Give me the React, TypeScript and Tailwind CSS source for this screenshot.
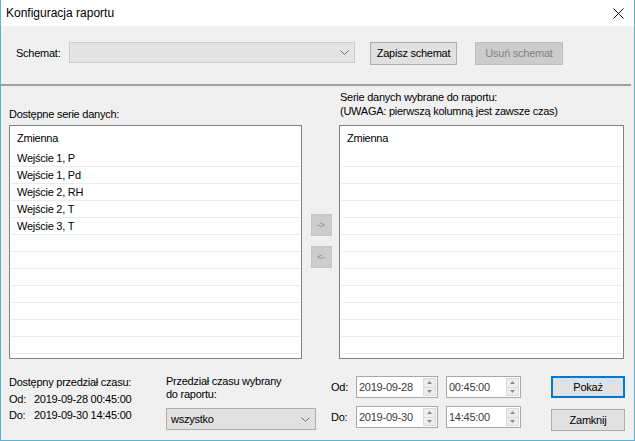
import React from 'react';

const Chevron = ({ color = '#707070' }: { color?: string }) => (
  <svg width="9" height="5" viewBox="0 0 9 5">
    <path d="M0.5 0.5 L4.5 4.5 L8.5 0.5" fill="none" stroke={color} strokeWidth="1" />
  </svg>
);

const Spin = () => (
  <div className="w-[13px] flex flex-col my-[1px] mr-[1px] border border-[#dadada] bg-[#ededed]">
    <div className="flex-1 flex items-center justify-center border-b border-[#dadada]">
      <svg width="5" height="3" viewBox="0 0 5 3"><path d="M0 3 L2.5 0 L5 3Z" fill="#8a8a8a" /></svg>
    </div>
    <div className="flex-1 flex items-center justify-center">
      <svg width="5" height="3" viewBox="0 0 5 3"><path d="M0 0 L2.5 3 L5 0Z" fill="#8a8a8a" /></svg>
    </div>
  </div>
);

const SpinBox = ({ value, w }: { value: string; w: string }) => (
  <div className={`${w} h-[22px] flex bg-white border border-[#a8a8a8]`}>
    <div className="flex-1 flex items-center pl-[2px] text-[#3a3a3a]">{value}</div>
    <Spin />
  </div>
);

const ListBox = ({ items, width }: { items: string[]; width: string }) => {
  const rows = Array.from({ length: 12 }, (_, i) => items[i] ?? '');
  return (
    <div className={`${width} h-[234px] bg-white border border-[#828282] overflow-hidden`}>
      <div className="h-[24px] flex items-center pl-[7px]">Zmienna</div>
      {rows.map((r, i) => (
        <div key={i} className="h-[17px] mx-[1px] border-b border-[#ececec] flex items-center pl-[6px]">
          {r}
        </div>
      ))}
    </div>
  );
};

export default function App() {
  return (
    <div className="w-[635px] h-[441px] bg-[#f0f0f0] border-x border-b border-[#5cb3cf] flex flex-col font-['Liberation_Sans',Arial,sans-serif] text-[11px] tracking-[-0.25px] text-black leading-[13px] overflow-hidden">
      {/* title bar */}
      <div className="h-[26px] bg-white flex items-center justify-between pl-[5px] pr-[10px]">
        <span className="text-[12px] tracking-normal">Konfiguracja raportu</span>
        <svg width="11" height="11" viewBox="0 0 11 11">
          <path d="M0.5 0.5 L10.5 10.5 M10.5 0.5 L0.5 10.5" stroke="#111" strokeWidth="1" />
        </svg>
      </div>

      {/* schemat row */}
      <div className="h-[58px] pt-[16px] flex items-start">
        <span className="ml-[15px] w-[53px] h-[22px] flex items-center">Schemat:</span>
        <div className="w-[286px] h-[21px] bg-[#e4e4e4] border border-[#cccccc] flex items-center justify-end pr-[5px]">
          <Chevron />
        </div>
        <button className="ml-[15px] w-[87px] h-[23px] bg-[#e1e1e1] border border-[#adadad] flex items-center justify-center">
          Zapisz schemat
        </button>
        <button className="ml-[18px] w-[88px] h-[23px] bg-[#cccccc] border border-[#bfbfbf] text-[#838383] flex items-center justify-center">
          Usuń schemat
        </button>
      </div>

      {/* separator */}
      <div className="h-[2px] -ml-[1px] mr-[3px] bg-[#a0a0a0]" />

      {/* lists */}
      <div className="flex pl-[8px]">
        <div className="flex flex-col">
          <div className="h-[39px] flex items-end pb-[4px]">Dostępne serie danych:</div>
          <ListBox
            width="w-[293px]"
            items={['Wejście 1, P', 'Wejście 1, Pd', 'Wejście 2, RH', 'Wejście 2, T', 'Wejście 3, T']}
          />
        </div>
        <div className="w-[37px] flex flex-col items-center pt-[128px] pl-[1px]">
          <div className="w-[21px] h-[22px] bg-[#cccccc] border border-[#c4c4c4] text-[#8a8a8a] text-[9px] flex items-center justify-center">
            -&gt;
          </div>
          <div className="mt-[10px] w-[21px] h-[22px] bg-[#cccccc] border border-[#c4c4c4] text-[#8a8a8a] text-[9px] flex items-center justify-center">
            &lt;-
          </div>
        </div>
        <div className="flex flex-col">
          <div className="h-[39px] pt-[4px] pl-[1px] leading-[14px]">
            <div>Serie danych wybrane do raportu:</div>
            <div>(UWAGA: pierwszą kolumną jest zawsze czas)</div>
          </div>
          <ListBox width="w-[285px]" items={[]} />
        </div>
      </div>

      {/* bottom */}
      <div className="flex pl-[8px] pt-[17px]">
        <div className="w-[157px] flex flex-col leading-[16.5px] -mt-[2px]">
          <div>Dostępny przedział czasu:</div>
          <div className="flex">
            <span className="w-[25px]">Od:</span>
            <span>2019-09-28 00:45:00</span>
          </div>
          <div className="flex">
            <span className="w-[25px]">Do:</span>
            <span>2019-09-30 14:45:00</span>
          </div>
        </div>
        <div className="w-[163px] flex flex-col -mt-[1px]">
          <div>Przedział czasu wybrany</div>
          <div>do raportu:</div>
          <div className="mt-[7px] w-[150px] h-[22px] bg-[#e1e1e1] border border-[#adadad] flex items-center justify-between pl-[4px] pr-[5px]">
            <span>wszystko</span>
            <Chevron />
          </div>
        </div>
        <div className="flex flex-col gap-[8px]">
          <div className="flex items-center">
            <span className="w-[27px] pl-[2px]">Od:</span>
            <SpinBox value="2019-09-28" w="w-[82px]" />
            <div className="ml-[8px]"><SpinBox value="00:45:00" w="w-[75px]" /></div>
          </div>
          <div className="flex items-center">
            <span className="w-[27px] pl-[2px]">Do:</span>
            <SpinBox value="2019-09-30" w="w-[82px]" />
            <div className="ml-[8px]"><SpinBox value="14:45:00" w="w-[75px]" /></div>
          </div>
        </div>
        <div className="ml-[30px] flex flex-col">
          <button className="w-[74px] h-[22px] bg-[#e1e1e1] border-2 border-[#0078d7] flex items-center justify-center">
            Pokaż
          </button>
          <button className="mt-[11px] w-[74px] h-[22px] bg-[#e1e1e1] border border-[#adadad] flex items-center justify-center">
            Zamknij
          </button>
        </div>
      </div>
    </div>
  );
}
